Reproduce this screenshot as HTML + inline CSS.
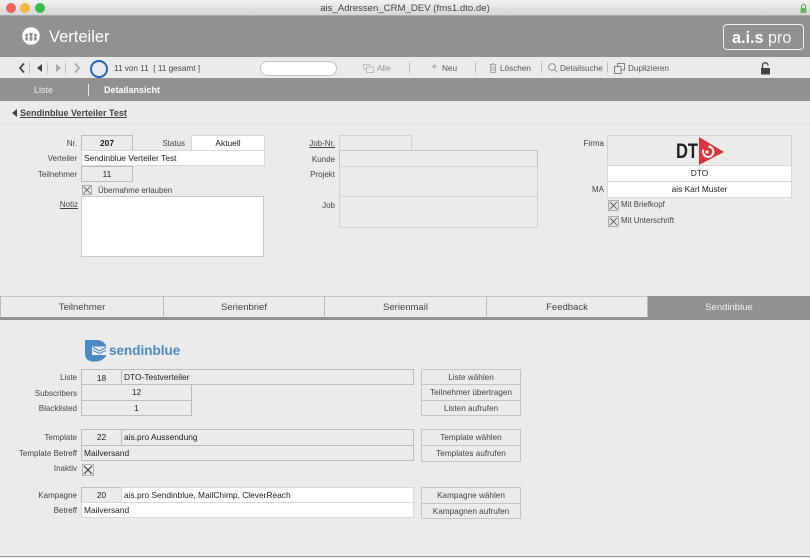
<!DOCTYPE html>
<html lang="de"><head><meta charset="utf-8"><title>ais_Adressen_CRM_DEV</title>
<style>
html,body{margin:0;padding:0;background:#ebebeb}
#p{position:relative;width:810px;height:558px;overflow:hidden;background:#ebebeb;font:8.2px/1 "Liberation Sans",sans-serif;color:#333;filter:blur(.3px)}
#p div,#p svg{position:absolute}
.t{white-space:nowrap}
.l{text-align:right;white-space:nowrap;color:#444;font-size:8px;margin-top:1px}
.b{box-sizing:border-box;border:1px solid #bcbcbc;white-space:nowrap;padding-left:2px;color:#222;line-height:15px;font-size:8.4px}
.w{background:#fff;border-color:#d8d8d8}
.c{text-align:center;padding:0}
.g{background:#ebebeb}
.e{border-color:#d2d2d2;background:#ebebeb}
.btn{box-sizing:border-box;border:1px solid #c4c4c4;border-radius:1px;text-align:center;color:#444;line-height:15px;white-space:nowrap;font-size:8.2px}
.tab{box-sizing:border-box;top:296px;height:21px;border-top:1px solid #c2c2c2;border-right:1px solid #bcbcbc;text-align:center;line-height:22px;font-size:9.5px;color:#444}
.sep{background:#bdbdbd;width:1px}
</style></head><body><div id="p">
<!-- title bar -->
<div style="left:0;top:0;width:810px;height:16px;background:linear-gradient(#f2f2f2,#d6d6d6);border-bottom:1px solid #a8a8a8;box-sizing:border-box"></div>
<div style="left:6px;top:3px;width:10px;height:10px;border-radius:50%;background:#f2605a"></div>
<div style="left:20px;top:3px;width:10px;height:10px;border-radius:50%;background:#f6b73c"></div>
<div style="left:35px;top:3px;width:10px;height:10px;border-radius:50%;background:#35c04a"></div>
<div class="t" style="left:0;width:810px;top:4px;text-align:center;font-size:9.6px;color:#444">ais_Adressen_CRM_DEV (fms1.dto.de)</div>
<svg style="left:799px;top:3px" width="9" height="11" viewBox="0 0 9 11"><path d="M2.500 5V3.400a2 2 0 0 1 4 0V5" fill="none" stroke="#5aa85a"/><rect x="1.500" y="5" width="6" height="5" rx="1" fill="#63b863"/></svg>

<!-- header -->
<div style="left:0;top:16px;width:810px;height:41px;background:#919191"></div>
<svg style="left:22px;top:27px" width="18" height="18" viewBox="0 0 18 18"><circle cx="9" cy="9" r="8.800" fill="#fff"/><g fill="#919191"><circle cx="4.600" cy="8.200" r="1.500"/><circle cx="9" cy="7.400" r="1.700"/><circle cx="13.400" cy="8.200" r="1.500"/><rect x="3.300" y="10" width="2.600" height="3.600" rx=".8"/><rect x="7.500" y="9.400" width="3" height="4.400" rx=".8"/><rect x="12.100" y="10" width="2.600" height="3.600" rx=".8"/></g></svg>
<div class="t" style="left:49px;top:29px;font-size:16.500px;color:#fff">Verteiler</div>
<div style="left:723px;top:24px;width:81px;height:26px;box-sizing:border-box;border:1.500px solid #f0f0f0;border-radius:4px"></div>
<div class="t" style="left:732px;top:30px;font-size:16.200px;color:#fff"><b>a.i.s</b> <span style="color:#f4f4f4">pro</span></div>

<!-- toolbar -->
<div style="left:0;top:57px;width:810px;height:21px;background:#ebebeb"></div>
<svg style="left:17px;top:61px" width="70" height="14" viewBox="0 0 70 14"><path d="M7 2.500 3 7l4 4.500" fill="none" stroke="#444" stroke-width="1.700"/><path d="M12.500 1.500v11M30.500 1.500v11M48.500 1.500v11" stroke="#c0c0c0" fill="none"/><path d="M25 3v8l-5-4z" fill="#444"/><path d="M39 3v8l5-4z" fill="#a8a8a8"/><path d="M58 2.500 62 7l-4 4.500" fill="none" stroke="#a8a8a8" stroke-width="1.700"/></svg>
<div style="left:90px;top:60px;width:18px;height:18px;box-sizing:border-box;border:2.500px solid #2065bd;border-radius:50%"></div>
<div class="t" style="left:114px;top:65px;color:#444">11 von 11 &nbsp;[ 11 gesamt ]</div>
<div style="left:260px;top:61px;width:77px;height:15px;box-sizing:border-box;background:#fff;border:1px solid #c4c4c4;border-radius:8px"></div>
<svg style="left:363px;top:64px" width="11" height="9" viewBox="0 0 11 9" fill="none" stroke="#b5b5b5" stroke-width=".8"><rect x=".5" y=".5" width="6" height="5"/><rect x="3.500" y="3" width="7" height="5.500" fill="#ebebeb"/></svg>
<div class="t" style="left:377px;top:65px;color:#999">Alle</div>
<div class="sep" style="left:409px;top:62px;height:11px"></div>
<div class="t" style="left:431px;top:62px;font-size:11px;color:#999">+</div>
<div class="t" style="left:442px;top:65px;color:#555">Neu</div>
<div class="sep" style="left:475px;top:62px;height:11px"></div>
<svg style="left:489px;top:63px" width="8" height="10" viewBox="0 0 8 10" fill="none" stroke="#999" stroke-width=".8"><path d="M.5 1.500h7M1.500 1.500v8h5v-8M3 .5h2M3 3v5M5 3v5"/></svg>
<div class="t" style="left:500px;top:65px;color:#555">Löschen</div>
<div class="sep" style="left:541px;top:62px;height:11px"></div>
<svg style="left:548px;top:63px" width="10" height="10" viewBox="0 0 10 10" fill="none" stroke="#777" stroke-width=".8"><circle cx="4" cy="4" r="3.400"/><path d="M6.500 6.500 9.500 9.500"/></svg>
<div class="t" style="left:560px;top:65px;color:#555">Detailsuche</div>
<div class="sep" style="left:607px;top:62px;height:11px"></div>
<svg style="left:614px;top:63px" width="11" height="11" viewBox="0 0 11 11" fill="none" stroke="#666" stroke-width=".8"><rect x="3.500" y=".5" width="7" height="6.500"/><rect x=".5" y="3.500" width="6.500" height="7" fill="#ebebeb"/></svg>
<div class="t" style="left:628px;top:65px;color:#555">Duplizieren</div>
<svg style="left:760px;top:62px" width="11" height="13" viewBox="0 0 11 13"><path d="M2.500 6V3.500a2.800 2.800 0 0 1 5.600 0" fill="none" stroke="#444" stroke-width="1.300"/><rect x="1" y="6" width="9" height="6.500" fill="#444"/></svg>

<!-- nav bar -->
<div style="left:0;top:78px;width:810px;height:23px;background:#919191"></div>
<div class="t" style="left:34px;top:86px;font-size:9px;color:#eee">Liste</div>
<div style="left:88px;top:84px;width:1px;height:12px;background:#e8e8e8"></div>
<div class="t" style="left:104px;top:86px;font-size:9px;font-weight:bold;color:#fff">Detailansicht</div>

<!-- breadcrumb -->
<svg style="left:12px;top:109px" width="6" height="8" viewBox="0 0 6 8"><path d="M5 0v8L0 4z" fill="#444"/></svg>
<div class="t" style="left:20px;top:109px;font-size:9px;font-weight:bold;color:#444;text-decoration:underline">Sendinblue Verteiler Test</div>
<div style="left:0;top:123px;width:810px;height:1px;background:#e0e0e0"></div>

<!-- left form -->
<div class="l" style="left:20px;width:57px;top:139px">Nr.</div>
<div class="b c g" style="left:81px;top:135px;width:52px;height:16px"><b>207</b></div>
<div class="l" style="left:140px;width:45px;top:139px">Status</div>
<div class="b w c" style="left:191px;top:135px;width:74px;height:16px">Aktuell</div>
<div class="l" style="left:20px;width:57px;top:154px">Verteiler</div>
<div class="b w" style="left:81px;top:150px;width:184px;height:16px">Sendinblue Verteiler Test</div>
<div class="l" style="left:20px;width:57px;top:170px">Teilnehmer</div>
<div class="b c g" style="left:81px;top:166px;width:52px;height:16px">11</div>
<svg style="left:82px;top:185px" width="10" height="10" viewBox="0 0 10 10"><rect x=".5" y=".5" width="9" height="9" fill="#e6e6e6" stroke="#aaa"/><path d="M1.500 1.500l7 7M8.500 1.500l-7 7" stroke="#555" stroke-width=".8"/></svg>
<div class="t" style="left:98px;top:187px;font-size:7.900px;color:#444">Übernahme erlauben</div>
<div class="l" style="left:20px;width:58px;top:200px;text-decoration:underline">Notiz</div>
<div class="b w" style="left:81px;top:196px;width:183px;height:61px;border-color:#c8c8c8"></div>

<!-- middle form -->
<div class="l" style="left:290px;width:45px;top:139px;text-decoration:underline">Job-Nr.</div>
<div class="b e" style="left:339px;top:135px;width:73px;height:16px"></div>
<div class="l" style="left:290px;width:45px;top:155px">Kunde</div>
<div class="b e" style="left:339px;top:150px;width:199px;height:17px;border-color:#c4c4c4"></div>
<div class="l" style="left:290px;width:45px;top:170px">Projekt</div>
<div class="b e" style="left:339px;top:166px;width:199px;height:31px"></div>
<div class="l" style="left:290px;width:45px;top:201px">Job</div>
<div class="b e" style="left:339px;top:196px;width:199px;height:32px"></div>

<!-- right form -->
<div class="l" style="left:560px;width:44px;top:139px">Firma</div>
<div class="b e" style="left:607px;top:135px;width:185px;height:31px"></div>
<svg style="left:670px;top:135px" width="60" height="30" viewBox="0 0 60 30"><text x="6" y="23" font-family="Liberation Sans, sans-serif" font-size="21" font-weight="bold" fill="#222" textLength="22" lengthAdjust="spacingAndGlyphs">DT</text><path d="M29 2 54 17 29 30z" fill="#d9353c"/><path d="M38.500 11.500a5.200 5.200 0 1 1-5 3" fill="none" stroke="#fff" stroke-width="1.900"/><circle cx="37" cy="17" r="1.500" fill="#fff"/></svg>
<div class="b w c" style="left:607px;top:165px;width:185px;height:17px">DTO</div>
<div class="l" style="left:560px;width:44px;top:185px">MA</div>
<div class="b w c" style="left:607px;top:181px;width:185px;height:17px">ais Karl Muster</div>
<svg style="left:608px;top:200px" width="11" height="11" viewBox="0 0 11 11"><rect x=".5" y=".5" width="10" height="10" fill="#e6e6e6" stroke="#aaa"/><path d="M2 2l7 7M9 2l-7 7" stroke="#444" stroke-width=".8"/></svg>
<div class="t" style="left:621px;top:201px;font-size:7.900px;color:#444">Mit Briefkopf</div>
<svg style="left:608px;top:216px" width="11" height="11" viewBox="0 0 11 11"><rect x=".5" y=".5" width="10" height="10" fill="#e6e6e6" stroke="#aaa"/><path d="M2 2l7 7M9 2l-7 7" stroke="#444" stroke-width=".8"/></svg>
<div class="t" style="left:621px;top:217px;font-size:7.900px;color:#444">Mit Unterschrift</div>

<!-- tabs -->
<div class="tab" style="left:0;width:164px;border-left:1px solid #bcbcbc">Teilnehmer</div>
<div class="tab" style="left:164px;width:161px">Serienbrief</div>
<div class="tab" style="left:325px;width:162px">Serienmail</div>
<div class="tab" style="left:487px;width:161px">Feedback</div>
<div class="tab" style="left:648px;width:162px;background:#919191;color:#f2f2f2;border:0;line-height:23px">Sendinblue</div>
<div style="left:0;top:317px;width:810px;height:3px;background:#919191"></div>

<!-- sendinblue logo -->
<svg style="left:85px;top:340px" width="24" height="22" viewBox="0 0 24 22"><path d="M0 0h12a10 10 0 0 1 9.500 6.500H7V15h14.500q-3 6-10 6.500H8Q0 21 0 13z" fill="#4a89c4"/><path d="M8 7.500 14.500 11 21 7.500V15H8z" fill="#f4f7fa"/><path d="M8 7.500 14.500 11 21 7.500M8 10.500 14.500 13.500 21 10.500" fill="none" stroke="#4a89c4" stroke-width="1.100"/></svg>
<div class="t" style="left:109px;top:344px;font-size:13.500px;font-weight:bold;color:#4a89c4">sendinblue</div>

<!-- Liste -->
<div class="l" style="left:10px;width:67px;top:373px">Liste</div>
<div class="b c g" style="left:81px;top:369px;width:41px;height:16px;line-height:16px">18</div>
<div class="b g" style="left:121px;top:369px;width:293px;height:16px">DTO-Testverteiler</div>
<div class="l" style="left:10px;width:67px;top:389px">Subscribers</div>
<div class="b c g" style="left:81px;top:384px;width:111px;height:17px">12</div>
<div class="l" style="left:10px;width:67px;top:404px">Blacklisted</div>
<div class="b c g" style="left:81px;top:400px;width:111px;height:16px">1</div>
<div class="btn" style="left:421px;top:369px;width:100px;height:16px;line-height:16px">Liste wählen</div>
<div class="btn" style="left:421px;top:384px;width:100px;height:17px">Teilnehmer übertragen</div>
<div class="btn" style="left:421px;top:400px;width:100px;height:16px">Listen aufrufen</div>

<!-- Template -->
<div class="l" style="left:10px;width:67px;top:433px">Template</div>
<div class="b c g" style="left:81px;top:429px;width:41px;height:17px">22</div>
<div class="b g" style="left:121px;top:429px;width:293px;height:17px">ais.pro Aussendung</div>
<div class="l" style="left:10px;width:67px;top:449px">Template Betreff</div>
<div class="b g" style="left:81px;top:445px;width:333px;height:16px">Mailversand</div>
<div class="l" style="left:10px;width:67px;top:464px">Inaktiv</div>
<svg style="left:82px;top:464px" width="12" height="12" viewBox="0 0 12 12"><rect x=".5" y=".5" width="11" height="11" fill="#e6e6e6" stroke="#b5b5b5"/><path d="M2 2l8 8M10 2l-8 8" stroke="#333"/></svg>
<div class="btn" style="left:421px;top:429px;width:100px;height:17px">Template wählen</div>
<div class="btn" style="left:421px;top:445px;width:100px;height:17px">Templates aufrufen</div>

<!-- Kampagne -->
<div class="l" style="left:10px;width:67px;top:491px">Kampagne</div>
<div class="b c g" style="left:81px;top:487px;width:41px;height:16px">20</div>
<div class="b w" style="left:121px;top:487px;width:293px;height:16px">ais.pro Sendinblue, MailChimp, CleverReach</div>
<div class="l" style="left:10px;width:67px;top:506px">Betreff</div>
<div class="b w" style="left:81px;top:502px;width:333px;height:16px">Mailversand</div>
<div class="btn" style="left:421px;top:487px;width:100px;height:17px">Kampagne wählen</div>
<div class="btn" style="left:421px;top:503px;width:100px;height:16px">Kampagnen aufrufen</div>

<div style="left:0;top:556px;width:810px;height:1px;background:#999"></div>
</div></body></html>
